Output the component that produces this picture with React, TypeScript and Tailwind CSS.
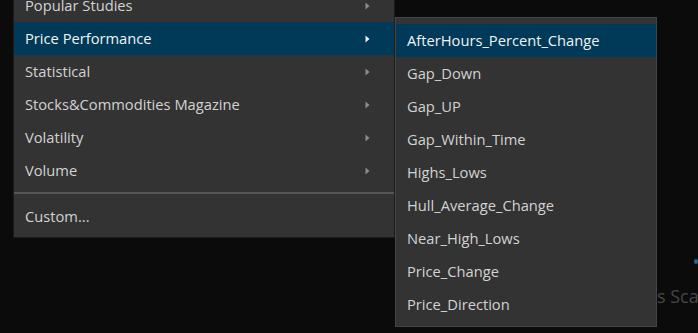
import React from 'react';

const studies = [
  'Popular Studies',
  'Price Performance',
  'Statistical',
  'Stocks&Commodities Magazine',
  'Volatility',
  'Volume',
];

const priceItems = [
  'AfterHours_Percent_Change',
  'Gap_Down',
  'Gap_UP',
  'Gap_Within_Time',
  'Highs_Lows',
  'Hull_Average_Change',
  'Near_High_Lows',
  'Price_Change',
  'Price_Direction',
];

function Arrow({ active }: { active: boolean }) {
  return (
    <svg width="5" height="8" viewBox="0 0 5 8" className="shrink-0">
      <path d="M0.5 0.5 L4.5 4 L0.5 7.5 Z" fill={active ? '#f0f0f0' : '#8c8c8c'} />
    </svg>
  );
}

export default function App() {
  return (
    <div
      className="relative w-[698px] h-[333px] overflow-hidden bg-[#0b0b0b] text-[14.7px]"
      style={{ fontFamily: '"Open Sans", "Noto Sans", sans-serif' }}
    >
      {/* background content peeking out behind the menus */}
      <div className="absolute left-[657px] top-[283px] text-[18px] text-[#464646] whitespace-nowrap">s Scan</div>
      <div className="absolute left-[694px] top-[259px] w-[4px] h-[5px] bg-[#1b6a8c] rounded-sm" />

      <div className="flex items-start">
        {/* main studies menu */}
        <div className="ml-[13px] -mt-[12px] w-[382px] bg-[#333333] border border-[#1c1c1c] pb-[4px]">
          {studies.map((s) => {
            const active = s === 'Price Performance';
            return (
              <div
                key={s}
                className={`h-[33px] flex items-center justify-between pl-[11px] pr-[24px] ${
                  active ? 'bg-[#003a58] text-[#f2f2f2]' : 'text-[#d2d2d2]'
                }`}
              >
                <span>{s}</span>
                <Arrow active={active} />
              </div>
            );
          })}
          <div className="mt-[5px] mb-[6px] h-[2px] bg-[#565656]" />
          <div className="h-[33px] flex items-center pl-[11px] text-[#d2d2d2]">Custom...</div>
        </div>

        {/* Price Performance submenu */}
        <div className="mt-[17px] w-[262px] bg-[#333333] border border-[#454545] pt-[6px] pb-[5px]">
          {priceItems.map((p, i) => (
            <div
              key={p}
              className={`h-[33px] flex items-center pl-[11px] ${
                i === 0 ? 'bg-[#003a58] text-[#f2f2f2]' : 'text-[#d2d2d2]'
              }`}
            >
              {p}
            </div>
          ))}
        </div>
      </div>
    </div>
  );
}
